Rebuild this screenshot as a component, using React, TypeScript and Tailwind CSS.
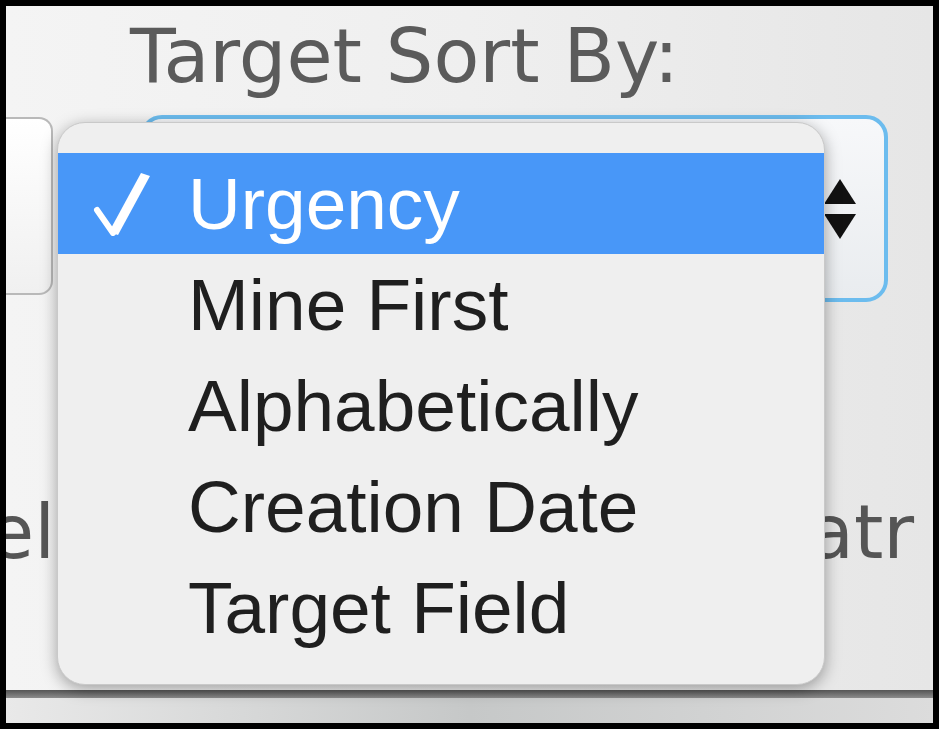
import React from 'react'

const options = ['Urgency', 'Mine First', 'Alphabetically', 'Creation Date', 'Target Field']

function CheckMark() {
  return (
    <svg width="58" height="64" viewBox="0 0 58 64" className="shrink-0">
      <path d="M4 38 L20 61" stroke="white" strokeWidth="6" strokeLinecap="round" fill="none" />
      <polygon points="16,60 25,63 57,4 48,1" fill="white" />
    </svg>
  )
}

function UpDownArrows() {
  return (
    <svg width="36" height="64" viewBox="0 0 36 64">
      <path d="M18 2 L34 27 L2 27 Z" fill="#111" />
      <path d="M2 37 L34 37 L18 62 Z" fill="#111" />
    </svg>
  )
}

function SortMenu() {
  const selected = 'Urgency'
  return (
    <div className="absolute left-[51px] top-[116px] w-[768px] h-[563px] pt-[30px] rounded-[28px] bg-[#efefef] border border-[#c9c9c9] shadow-[0_4px_16px_rgba(0,0,0,0.35)] font-['Liberation_Sans',Arial,sans-serif]">
      {options.map(opt => {
        const active = opt === selected
        return (
          <div
            key={opt}
            className={
              active
                ? 'flex items-center h-[101px] pl-[35px] bg-[#4897f8] text-white'
                : 'flex items-center h-[101px] pl-[35px] text-[#1f1f1f]'
            }
          >
            <div className="w-[95px] shrink-0">{active && <CheckMark />}</div>
            <span className="text-[73px] leading-[101px] whitespace-nowrap">{opt}</span>
          </div>
        )
      })}
    </div>
  )
}

export default function App() {
  return (
    <div className="w-[939px] h-[729px] bg-black p-[6px]">
      <div className="relative h-full w-full overflow-hidden flex flex-col bg-gradient-to-r from-[#f4f4f4] via-[#efefef] to-[#e6e6e6] font-['DejaVu_Sans',sans-serif]">
        <div className="pl-[124px] mt-[8px] text-[75px] leading-[84px] text-[#5b5b5b] whitespace-nowrap">
          Target Sort By:
        </div>

        <div className="mt-[17px] h-[187px] flex">
          <div className="mt-[2px] h-[178px] w-[47px] shrink-0 rounded-r-[14px] border-y-2 border-r-2 border-[#b9b9b9] bg-gradient-to-b from-white to-[#f0f0f0]" />
          <div className="ml-[87px] w-[748px] h-full shrink-0 rounded-[22px] border-[4px] border-[#6cbcee] bg-gradient-to-b from-[#f7f8fa] to-[#e9ecef] flex items-center justify-end pr-[26px]">
            <UpDownArrows />
          </div>
        </div>

        <div className="mt-[188px] flex text-[75px] leading-[84px] text-[#555]">
          <div className="w-[49px] overflow-hidden flex justify-end whitespace-nowrap">el</div>
          <div className="ml-auto w-[125px] overflow-hidden whitespace-nowrap">atr</div>
        </div>

        <div className="flex-1" />

        <div className="h-[8px] bg-gradient-to-b from-[#555] to-[#8c8c8c]" />
        <div className="h-[25px] bg-gradient-to-r from-[#e9e9e9] via-[#c6c8c8] to-[#dcdcdc]" />

        <SortMenu />
      </div>
    </div>
  )
}
